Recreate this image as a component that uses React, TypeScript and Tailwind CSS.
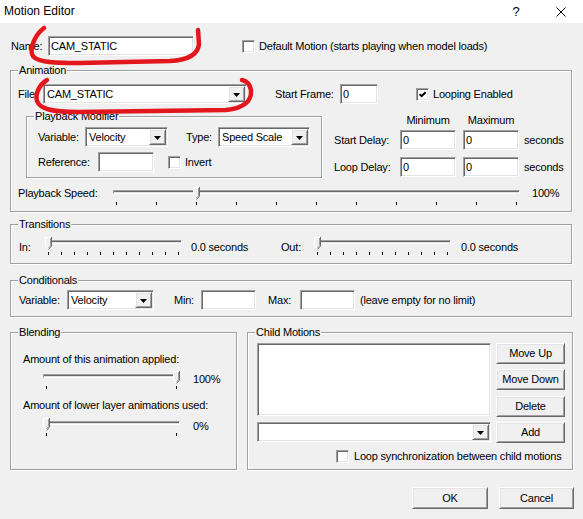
import React from 'react';

const sunken =
    'border border-t-[#a0a0a0] border-l-[#a0a0a0] border-b-white border-r-white shadow-[inset_1px_1px_0_#696969,inset_-1px_-1px_0_#e3e3e3]';
const raised =
    'border border-t-white border-l-white border-b-[#696969] border-r-[#696969] shadow-[inset_1px_1px_0_#e3e3e3,inset_-1px_-1px_0_#a0a0a0] bg-[#f0f0f0]';

const Edit = ({ className = '', value = '' }: { className?: string; value?: string }) => (
    <div className={`h-[20px] bg-white ${sunken} pl-[2px] flex items-center ${className}`}>{value}</div>
);

const Arrow = () => (
    <svg width="7" height="4" viewBox="0 0 7 4" className="mt-[1px]">
        <polygon points="0,0 7,0 3.5,4" fill="#000" />
    </svg>
);

const Combo = ({ className = '', value = '' }: { className?: string; value?: string }) => (
    <div className={`h-[20px] bg-white ${sunken} p-[1px] flex items-center ${className}`}>
        <span className="flex-1 pl-[2px] whitespace-nowrap overflow-hidden">{value}</span>
        <div className={`w-[17px] h-full ${raised} flex items-center justify-center`}>
            <Arrow />
        </div>
    </div>
);

const Check = ({ checked = false, className = '' }: { checked?: boolean; className?: string }) => (
    <div className={`w-[13px] h-[13px] shrink-0 bg-white ${sunken} flex items-center justify-center ${className}`}>
        {checked && (
            <svg width="7" height="7" viewBox="0 0 7 7">
                <polyline points="0.6,3.2 2.6,5.2 6.6,1.2" fill="none" stroke="#000" strokeWidth="2" />
            </svg>
        )}
    </div>
);

const Btn = ({ className = '', children }: { className?: string; children: React.ReactNode }) => (
    <button type="button" className={`${raised} flex items-center justify-center ${className}`}>
        {children}
    </button>
);

const Group = ({ label, className = '', children }: { label: string; className?: string; children?: React.ReactNode }) => (
    <div className={`relative shrink-0 border border-[#a0a0a0] shadow-[inset_1px_1px_0_#fff,1px_1px_0_#fff] ${className}`}>
        <span className="absolute left-[7px] -top-[7px] bg-[#f0f0f0] px-[1px] leading-[13px] whitespace-nowrap">{label}</span>
        {children}
    </div>
);

const Thumb = () => (
    <svg width="7" height="13" viewBox="0 0 7 13">
        <path d="M0 0H7V9L3.5 12.8L0 9Z" fill="#f0f0f0" />
        <path d="M0.5 9V0.5H6" stroke="#fff" fill="none" />
        <path d="M6.5 0V9L3.6 12.4" stroke="#696969" fill="none" />
        <path d="M5.5 1V8.6L3.4 11" stroke="#a0a0a0" fill="none" />
        <path d="M0.6 9.2L3 11.9" stroke="#fff" fill="none" />
    </svg>
);

// trackbar: thumb sits over the channel, ticks underneath
const Slider = ({ className = '', width, ticks, pos }: { className?: string; width: number; ticks: number; pos: number }) => (
    <div className={`relative shrink-0 flex flex-col pt-[3px] ${className}`}>
        <div className="h-[4px] border border-t-[#a0a0a0] border-l-[#a0a0a0] border-b-white border-r-white bg-[#e3e3e3] shadow-[inset_0_1px_0_#696969]" />
        <div className="mt-[8px] h-[3px] px-[3px] flex justify-between">
            {Array.from({ length: ticks }).map((_, i) => (
                <div key={i} className="w-[1px] h-[3px] bg-black" />
            ))}
        </div>
        <div className="absolute top-0" style={{ left: Math.round(pos * (width - 7)) }}>
            <Thumb />
        </div>
    </div>
);

export default function App() {
    return (
        <div className="relative w-[583px] h-[519px] overflow-hidden bg-[#f0f0f0] text-black text-[11px] leading-[13px] tracking-[-0.2px] font-['Liberation_Sans',Arial,sans-serif]">
            {/* title bar */}
            <div className="h-[23px] bg-white flex items-center pl-[4px] text-[12px] tracking-normal">
                <span className="flex-1">Motion Editor</span>
                <span className="w-[46px] text-center text-[13px]">?</span>
                <div className="w-[44px] flex justify-center">
                    <svg width="10" height="10" viewBox="0 0 10 10">
                        <path d="M0.5 0.5L9.5 9.5M9.5 0.5L0.5 9.5" stroke="#000" strokeWidth="1" />
                    </svg>
                </div>
            </div>

            {/* name row */}
            <div className="flex items-center h-[20px] mt-[13px] pl-[11px]">
                <span className="w-[37px]">Name:</span>
                <Edit className="w-[146px]" value="CAM_STATIC" />
                <Check className="ml-[48px]" />
                <span className="ml-[4px]">Default Motion (starts playing when model loads)</span>
            </div>

            <Group label="Animation" className="mt-[14px] ml-[10px] w-[562px] h-[142px]">
                <div className="flex items-center h-[20px] mt-[13px] pl-[7px]">
                    <span className="w-[25px]">File:</span>
                    <Combo className="w-[204px]" value="CAM_STATIC" />
                    <span className="w-[65px] ml-[28px]">Start Frame:</span>
                    <Edit className="w-[38px]" value="0" />
                    <Check checked className="ml-[38px]" />
                    <span className="ml-[4px]">Looping Enabled</span>
                </div>

                <div className="flex mt-[10px]">
                    <Group label="Playback Modifier" className="mt-[2px] ml-[15px] w-[296px] h-[62px]">
                        <div className="flex items-center h-[20px] mt-[10px] pl-[11px]">
                            <span className="w-[47px]">Variable:</span>
                            <Combo className="w-[83px]" value="Velocity" />
                            <span className="w-[32px] ml-[18px]">Type:</span>
                            <Combo className="w-[92px]" value="Speed Scale" />
                        </div>
                        <div className="flex items-center h-[20px] mt-[5px] pl-[11px]">
                            <span className="w-[60px]">Reference:</span>
                            <Edit className="w-[56px]" />
                            <Check className="ml-[14px]" />
                            <span className="ml-[4px]">Invert</span>
                        </div>
                    </Group>

                    <div className="ml-[12px] flex flex-col">
                        <div className="flex h-[13px]">
                            <span className="w-[66px]" />
                            <span className="w-[56px] text-center">Minimum</span>
                            <span className="w-[7px]" />
                            <span className="w-[56px] text-center">Maximum</span>
                        </div>
                        <div className="flex items-center h-[20px] mt-[3px]">
                            <span className="w-[66px]">Start Delay:</span>
                            <Edit className="w-[56px]" value="0" />
                            <Edit className="w-[56px] ml-[7px]" value="0" />
                            <span className="ml-[5px]">seconds</span>
                        </div>
                        <div className="flex items-center h-[20px] mt-[7px]">
                            <span className="w-[66px]">Loop Delay:</span>
                            <Edit className="w-[56px]" value="0" />
                            <Edit className="w-[56px] ml-[7px]" value="0" />
                            <span className="ml-[5px]">seconds</span>
                        </div>
                    </div>
                </div>

                <div className="flex items-start mt-[9px] pl-[7px]">
                    <span className="w-[95px]">Playback Speed:</span>
                    <Slider className="w-[407px]" width={407} ticks={11} pos={0.2} />
                    <span className="ml-[12px]">100%</span>
                </div>
            </Group>

            <Group label="Transitions" className="mt-[12px] ml-[10px] w-[562px] h-[40px]">
                <div className="flex items-start mt-[12px] pl-[8px]">
                    <span className="w-[26px] mt-[4px]">In:</span>
                    <Slider className="w-[137px]" width={137} ticks={11} pos={0} />
                    <span className="w-[90px] ml-[9px] mt-[4px]">0.0 seconds</span>
                    <span className="w-[33px] mt-[4px]">Out:</span>
                    <Slider className="w-[137px]" width={137} ticks={11} pos={0} />
                    <span className="ml-[10px] mt-[4px]">0.0 seconds</span>
                </div>
            </Group>

            <Group label="Conditionals" className="mt-[16px] ml-[10px] w-[562px] h-[37px]">
                <div className="flex items-center h-[20px] mt-[9px] pl-[8px]">
                    <span className="w-[48px]">Variable:</span>
                    <Combo className="w-[87px]" value="Velocity" />
                    <span className="w-[27px] ml-[20px]">Min:</span>
                    <Edit className="w-[55px]" />
                    <span className="w-[32px] ml-[12px]">Max:</span>
                    <Edit className="w-[55px]" />
                    <span className="ml-[5px]">(leave empty for no limit)</span>
                </div>
            </Group>

            <div className="flex mt-[15px]">
                <Group label="Blending" className="ml-[10px] w-[227px] h-[138px]">
                    <div className="pl-[12px] pt-[20px]">
                        <div>Amount of this animation applied:</div>
                        <div className="flex items-start mt-[5px] pl-[20px]">
                            <Slider className="w-[137px]" width={137} ticks={2} pos={1} />
                            <span className="ml-[13px] mt-[2px]">100%</span>
                        </div>
                        <div className="mt-[10px]">Amount of lower layer animations used:</div>
                        <div className="flex items-start mt-[6px] pl-[20px]">
                            <Slider className="w-[137px]" width={137} ticks={2} pos={0} />
                            <span className="ml-[13px] mt-[2px]">0%</span>
                        </div>
                    </div>
                </Group>

                <Group label="Child Motions" className="ml-[10px] w-[326px] h-[138px]">
                    <div className="flex pl-[9px] pt-[10px]">
                        <div className="flex flex-col">
                            <div className={`w-[234px] h-[73px] bg-white ${sunken}`} />
                            <Combo className="w-[234px] mt-[6px]" />
                        </div>
                        <div className="flex flex-col ml-[5px]">
                            <Btn className="w-[69px] h-[21px]">Move Up</Btn>
                            <Btn className="w-[69px] h-[21px] mt-[5px]">Move Down</Btn>
                            <Btn className="w-[69px] h-[21px] mt-[6px]">Delete</Btn>
                            <Btn className="w-[69px] h-[21px] mt-[5px]">Add</Btn>
                        </div>
                    </div>
                    <div className="flex items-center h-[13px] mt-[7px] pl-[88px]">
                        <Check />
                        <span className="ml-[5px]">Loop synchronization between child motions</span>
                    </div>
                </Group>
            </div>

            <div className="flex justify-end gap-[11px] pr-[9px] mt-[17px]">
                <Btn className="w-[76px] h-[22px]">OK</Btn>
                <Btn className="w-[75px] h-[22px]">Cancel</Btn>
            </div>

            {/* red pen marks drawn over the dialog */}
            <svg className="absolute inset-0 pointer-events-none" width="583" height="519" viewBox="0 0 583 519">
                <path
                    d="M44 28 C36 34, 30 46, 32 54 C34 62, 50 63, 80 63 L170 61 C190 60, 198 54, 199 44 L198 30"
                    fill="none"
                    stroke="#e3161e"
                    strokeWidth="4.5"
                    strokeLinecap="round"
                    strokeLinejoin="round"
                />
                <path
                    d="M47 80 C39 85, 35 94, 37 101 C40 109, 52 112, 78 112 L226 110 C245 108, 252 100, 251 90 C250 84, 246 81, 242 80"
                    fill="none"
                    stroke="#e3161e"
                    strokeWidth="4.5"
                    strokeLinecap="round"
                    strokeLinejoin="round"
                />
            </svg>
        </div>
    );
}
